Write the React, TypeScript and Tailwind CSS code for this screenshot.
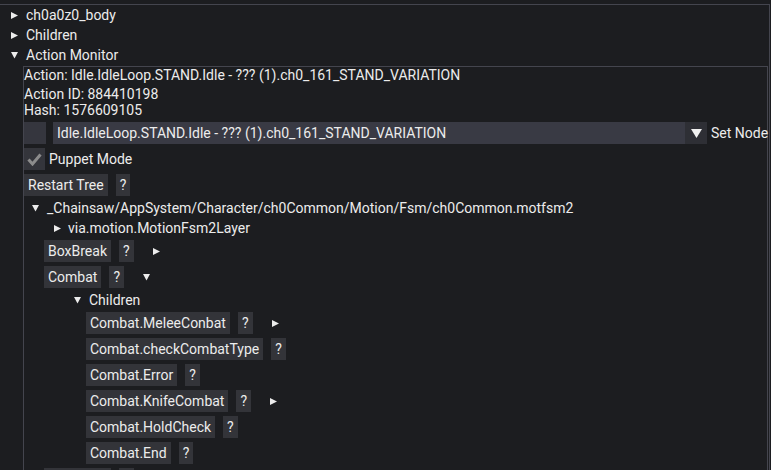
const Tri = ({ dir, className = "" }: { dir: "right" | "down"; className?: string }) => (
  <svg width="7" height="7" viewBox="0 0 7 7" className={`shrink-0 fill-[#ececec] ${className}`}>
    {dir === "right" ? <polygon points="0,0 7,3.5 0,7" /> : <polygon points="0,0 7,0 3.5,6.5" />}
  </svg>
);

const Btn = ({ label }: { label: string }) => (
  <div className="h-[22px] flex items-center px-[4px] bg-[#333439] leading-none whitespace-nowrap">{label}</div>
);

const NodeRow = ({ label, arrow, indent }: { label: string; arrow?: "right" | "down"; indent: string }) => (
  <div className={`flex items-center h-[22px] gap-[8px] ${indent}`}>
    <Btn label={label} />
    <Btn label="?" />
    {arrow && <Tri dir={arrow} className="ml-[11px]" />}
  </div>
);

const TreeRow = ({ label, dir, tri, text }: { label: string; dir: "right" | "down"; tri: string; text: string }) => (
  <div className="relative h-[20px] flex items-center">
    <Tri dir={dir} className={`absolute ${tri}`} />
    <span className={`absolute whitespace-nowrap ${text}`}>{label}</span>
  </div>
);

const combatChildren: { label: string; arrow?: "right" }[] = [
  { label: "Combat.MeleeConbat", arrow: "right" },
  { label: "Combat.checkCombatType" },
  { label: "Combat.Error" },
  { label: "Combat.KnifeCombat", arrow: "right" },
  { label: "Combat.HoldCheck" },
  { label: "Combat.End" },
];

export default function App() {
  return (
    <div className="w-[771px] h-[470px] overflow-hidden bg-[#1c1d20] text-[#ececec] text-[14px] font-['Roboto',sans-serif]">
      <div className="mt-[4px] w-[770px] h-[500px] border-t border-r border-[#44454e]">
        <TreeRow label="ch0a0z0_body" dir="right" tri="left-[11px]" text="left-[26px]" />
        <TreeRow label="Children" dir="right" tri="left-[11px]" text="left-[26px]" />
        <TreeRow label="Action Monitor" dir="down" tri="left-[11px]" text="left-[26px]" />

        <div className="mt-[1px] ml-[23px] w-[745px] h-[420px] border-t border-l border-r border-[#44454e]">
          <div className="leading-[16px] whitespace-nowrap">Action: Idle.IdleLoop.STAND.Idle - ??? (1).ch0_161_STAND_VARIATION</div>
          <div className="leading-[16px] mt-[3px]">Action ID: 884410198</div>
          <div className="leading-[16px]">Hash: 1576609105</div>

          {/* node select */}
          <div className="mt-[4px] flex items-center h-[22px] whitespace-nowrap">
            <div className="w-[22px] h-[22px] shrink-0 bg-[#35363e]" />
            <div className="ml-[7px] w-[632px] shrink-0 h-[22px] flex items-center pl-[4px] bg-[#393a44]">
              Idle.IdleLoop.STAND.Idle - ??? (1).ch0_161_STAND_VARIATION
            </div>
            <div className="w-[22px] h-[22px] shrink-0 flex items-center justify-center bg-[#2e2f35]">
              <svg width="11" height="9" viewBox="0 0 11 9" className="fill-[#f0f0f0]">
                <polygon points="0,0 11,0 5.5,9" />
              </svg>
            </div>
            <span className="ml-[4px]">Set Node</span>
          </div>

          {/* puppet mode */}
          <div className="mt-[4px] flex items-center h-[22px]">
            <div className="w-[21px] h-[22px] bg-[#34353b] flex items-center justify-center">
              <svg width="15" height="13" viewBox="0 0 15 13" fill="none" className="stroke-[#8c8c8c]">
                <polyline points="1.5,6.5 5.5,11 13.5,1.5" strokeWidth="3" />
              </svg>
            </div>
            <span className="ml-[4px]">Puppet Mode</span>
          </div>

          <div className="mt-[4px] flex items-center h-[22px] gap-[8px]">
            <Btn label="Restart Tree" />
            <Btn label="?" />
          </div>

          <div className="mt-[2px]">
            <TreeRow
              label="_Chainsaw/AppSystem/Character/ch0Common/Motion/Fsm/ch0Common.motfsm2"
              dir="down"
              tri="left-[8px]"
              text="left-[23px]"
            />
            <TreeRow label="via.motion.MotionFsm2Layer" dir="right" tri="left-[30px]" text="left-[44px]" />
          </div>

          <div className="mt-[2px] flex flex-col gap-[4px]">
            <NodeRow label="BoxBreak" arrow="right" indent="ml-[20px]" />
            <NodeRow label="Combat" arrow="down" indent="ml-[20px]" />
          </div>

          <div className="mt-[2px]">
            <TreeRow label="Children" dir="down" tri="left-[50px]" text="left-[65px]" />
          </div>

          <div className="mt-[2px] flex flex-col gap-[4px]">
            {combatChildren.map((c) => (
              <NodeRow key={c.label} label={c.label} arrow={c.arrow} indent="ml-[62px]" />
            ))}
            {/* next sibling, only its top edge is in view */}
            <div className="ml-[20px] flex items-center h-[22px] gap-[8px]">
              <div className="w-[67px] h-[22px] bg-[#333439]" />
              <div className="w-[15px] h-[22px] bg-[#333439]" />
            </div>
          </div>
        </div>
      </div>
    </div>
  );
}
